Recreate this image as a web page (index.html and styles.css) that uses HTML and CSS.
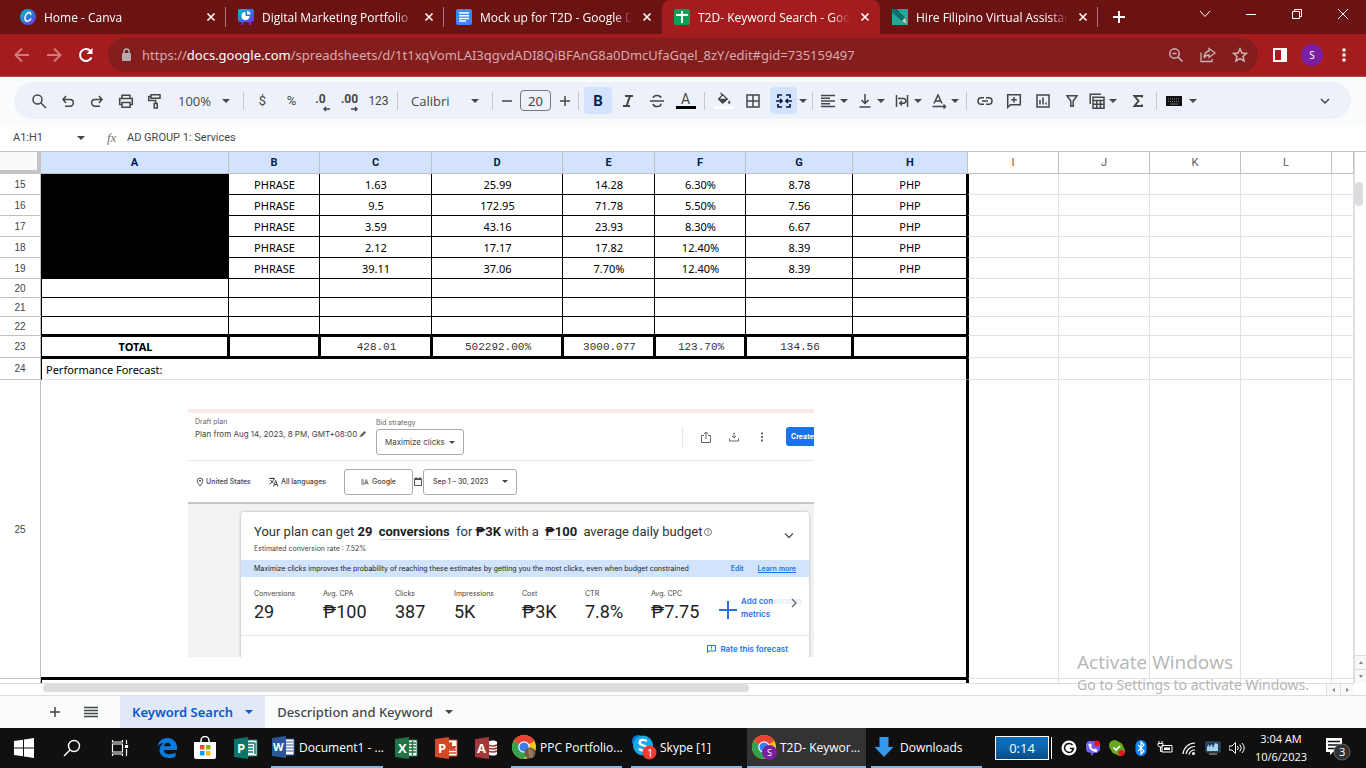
FILE: index.html
```html
<!DOCTYPE html>
<html lang="en">
<head>
  <meta charset="utf-8" />
  <meta name="viewport" content="width=device-width, initial-scale=1" />
  <title>T2D- Keyword Search - Google Sheets</title>
  <link rel="stylesheet" href="styles.css">
</head>
<body>
  <!-- browser tabs -->
  <header class="tabstrip">
    <div class="tab">
      <svg class="fav" viewBox="0 0 16 16"><defs><linearGradient id="cv" x1="0" y1="0" x2="1" y2="1"><stop offset="0" stop-color="#00c4cc"/><stop offset=".5" stop-color="#2f7be0"/><stop offset="1" stop-color="#7d2ae8"/></linearGradient></defs><circle cx="8" cy="8" r="8" fill="url(#cv)"/><path d="M10.6 5.6c.4-1.500-.3-2.100-1.300-2.100-2.300 0-4.400 3-4.400 5.700 0 1.900 1 3 2.600 3 1.500 0 2.700-1 3.300-2.300" fill="none" stroke="#fff" stroke-width="1.400" stroke-linecap="round"/></svg>
      <span class="title">Home - Canva</span>
      <button class="x" aria-label="Close tab"><svg viewBox="0 0 14 14"><path d="M3.500 3.500l7 7M10.500 3.500l-7 7"/></svg></button>
    </div>
    <div class="tab">
      <svg class="fav" viewBox="0 0 16 16"><path d="M5 12l-1.500 4M11 12l1.500 4" stroke="#7d2ae8" stroke-width="2"/><rect width="16" height="13" rx="2" fill="url(#cv)"/><path d="M7.500 3a4 4 0 1 0 4 4h-4z" fill="#fff"/><path d="M9 2v3.500h3.500A3.500 3.500 0 0 0 9 2z" fill="#fff"/></svg>
      <span class="title">Digital Marketing Portfolio -</span>
      <button class="x" aria-label="Close tab"><svg viewBox="0 0 14 14"><path d="M3.500 3.500l7 7M10.500 3.500l-7 7"/></svg></button>
    </div>
    <div class="tab">
      <svg class="fav" viewBox="0 0 16 16"><rect width="16" height="16" rx="2" fill="#4285f4"/><path d="M3 4h10M3 6.700h10M3 9.400h10M3 12h7" stroke="#fff" stroke-width="1.500"/></svg>
      <span class="title">Mock up for T2D - Google D</span>
      <button class="x" aria-label="Close tab"><svg viewBox="0 0 14 14"><path d="M3.500 3.500l7 7M10.500 3.500l-7 7"/></svg></button>
    </div>
    <div class="tab active">
      <svg class="fav" viewBox="0 0 16 16"><rect width="16" height="16" rx="2" fill="#0f9d58"/><path d="M2 6h12M8 2v12" stroke="#fff" stroke-width="2"/></svg>
      <span class="title">T2D- Keyword Search - Goo</span>
      <button class="x" aria-label="Close tab"><svg viewBox="0 0 14 14"><path d="M3.500 3.500l7 7M10.500 3.500l-7 7"/></svg></button>
    </div>
    <div class="tab">
      <svg class="fav" viewBox="0 0 16 16"><path fill="#26a69a" d="M0 0h16v16H0z"/><path d="M0 0h5l8 9-3 3L0 4z" fill="#0d7c73"/><path d="M1 1l9.500 10M3 0l9.500 9" stroke="#084f4b"/><path d="M10 12l3-3 1.500 5.500z" fill="#f4c7a0"/></svg>
      <span class="title">Hire Filipino Virtual Assistan</span>
      <button class="x" aria-label="Close tab"><svg viewBox="0 0 14 14"><path d="M3.500 3.500l7 7M10.500 3.500l-7 7"/></svg></button>
    </div>
    <button class="newtab" aria-label="New tab"><svg width="14" height="14" viewBox="0 0 14 14"><path d="M7 1v12M1 7h12" stroke="#fff" stroke-width="2"/></svg></button>
    <div class="winctl">
      <button aria-label="Search tabs"><svg width="12" height="12" viewBox="0 0 12 12"><path d="M1 3l5 5.500L11 3"/></svg></button>
      <button aria-label="Minimize"><svg width="12" height="12" viewBox="0 0 12 12"><path d="M1 6.500h10"/></svg></button>
      <button aria-label="Restore"><svg width="12" height="12" viewBox="0 0 12 12"><path d="M1.500 3.500h7v7h-7zM3.500 3V1.500h7v7H9"/></svg></button>
      <button aria-label="Close"><svg width="12" height="12" viewBox="0 0 12 12"><path d="M1 1l10 10M11 1L1 11"/></svg></button>
    </div>
  </header>

  <!-- address bar -->
  <nav class="navbar">
    <button class="dim" aria-label="Back"><svg width="16" height="16" viewBox="0 0 16 16"><path d="M15 8H2M8 1.500L1.500 8 8 14.500"/></svg></button>
    <button class="dim" aria-label="Forward"><svg width="16" height="16" viewBox="0 0 16 16"><path d="M1 8h13M8 1.500L14.500 8 8 14.500"/></svg></button>
    <button aria-label="Reload"><svg width="16" height="16" viewBox="0 0 16 16"><path d="M13.500 10.500A6 6 0 1 1 12.500 4"/><path d="M14.500 1v6h-6z" fill="#fff" stroke="none"/></svg></button>
    <div class="omnibox">
      <svg class="lock" width="12" height="14" viewBox="0 0 12 14"><rect x="2" y="5" width="9" height="8" rx="1" fill="#b3adae"/><path d="M4 5.500V3.500a2.500 2.500 0 0 1 5 0v2" fill="none" stroke="#b3adae" stroke-width="1.500"/></svg>
      <span class="url" role="textbox" aria-label="Address">https://<b>docs.google.com</b>/spreadsheets/d/1t1xqVomLAI3qgvdADI8QiBFAnG8a0DmcUfaGqel_8zY/edit#gid=735159497</span>
      <button aria-label="Zoom"><svg width="16" height="16" viewBox="0 0 16 16"><circle cx="6.500" cy="6.500" r="4.700"/><path d="M10 10l4.500 4.500M4.500 6.500h4"/></svg></button>
      <button aria-label="Share"><svg width="16" height="16" viewBox="0 0 16 16"><path d="M1 5.500v9h11V12M9 1.500l6 4.500-6 4.500V8c-2.500 0-4 .8-5 3 .2-4 2-6.500 5-7z" stroke-width="1.300"/></svg></button>
      <button aria-label="Bookmark"><svg width="16" height="16" viewBox="0 0 16 16"><path d="M8 1.800l1.900 4.200 4.600.4-3.500 3 1.100 4.500L8 11.500l-4.100 2.400L5 9.400l-3.500-3 4.600-.4z"/></svg></button>
    </div>
    <button aria-label="Side panel"><svg width="14" height="14" viewBox="0 0 14 14"><path d="M0 0h14v14H0z" fill="#fff" stroke="none"/><path d="M2 2h6v10H2z" fill="#a51c1e" stroke="none"/></svg></button>
    <button aria-label="Profile"><span class="avatar">S</span></button>
    <button aria-label="Menu"><svg width="4" height="14" viewBox="0 0 4 14"><path d="M.5.500h3v3h-3zM.5 5.500h3v3h-3zM.5 10.500h3v3h-3z" fill="#fff" stroke="none"/></svg></button>
  </nav>

  <!-- sheets toolbar -->
  <div class="toolbar">
    <div class="pill">
      <button class="tb" aria-label="Search"><svg viewBox="0 0 16 16"><circle cx="6.500" cy="6.500" r="4.500"/><path d="M10 10l5 5"/></svg></button>
      <button class="tb" aria-label="Undo"><svg viewBox="0 0 16 16"><path d="M6 3L3 6.500l3 3.500M3 6.500h7a3.300 3.300 0 0 1 0 6.700H5"/></svg></button>
      <button class="tb" aria-label="Redo"><svg viewBox="0 0 16 16"><path d="M10 3l3 3.500-3 3.500M13 6.500H6a3.300 3.300 0 0 0 0 6.700h5"/></svg></button>
      <button class="tb" aria-label="Print"><svg viewBox="0 0 16 16"><path d="M4 5.500V2.200h8v3.300M4 11.500H1.700v-6h12.600v6H12M4 9.500h8v4.800H4z"/></svg></button>
      <button class="tb" aria-label="Paint format"><svg viewBox="0 0 16 16"><path d="M4 1.700h9v3.600H4zM4 3.500H1.700v4h7v3M7.200 10.500h3v4.500h-3z"/></svg></button>
      <label class="pick zoom"><select aria-label="Zoom"><option>100%</option></select><i class="car"></i></label>
      <span class="sep"></span>
      <button class="tb txt" aria-label="Currency">$</button>
      <button class="tb txt" aria-label="Percent">%</button>
      <button class="tb dec" aria-label="Decrease decimals">.0<svg viewBox="0 0 8 6"><path d="M8 3H2M4 1L2 3l2 2"/></svg></button>
      <button class="tb dec" aria-label="Increase decimals">.00<svg viewBox="0 0 8 6"><path d="M0 3h6M4 1l2 2-2 2"/></svg></button>
      <button class="tb txt small" aria-label="More formats">123</button>
      <span class="sep"></span>
      <label class="pick font"><select aria-label="Font"><option>Calibri</option></select><i class="car"></i></label>
      <span class="sep"></span>
      <button class="step" aria-label="Smaller"><svg width="12" height="12" viewBox="0 0 12 12"><path d="M1 6h10"/></svg></button>
      <input class="size" type="text" value="20" aria-label="Font size">
      <button class="step" aria-label="Larger"><svg width="12" height="12" viewBox="0 0 12 12"><path d="M1 6h10M6 1v10"/></svg></button>
      <span class="sep"></span>
      <button class="tb on bold" aria-label="Bold">B</button>
      <button class="tb" aria-label="Italic"><svg viewBox="0 0 16 16"><path d="M5 3h8M3 13h7M10 3L6.500 13" stroke-width="2"/></svg></button>
      <button class="tb" aria-label="Strikethrough"><svg viewBox="0 0 16 16"><path d="M1 8h14M12 4.800C11.500 3 10 2.500 8 2.500 5.500 2.500 4.300 3.500 4.300 5M4 11c.4 1.800 2 2.500 4 2.500 2.500 0 4-1 4-2.800" stroke-width="1.600"/></svg></button>
      <button class="tb ink" aria-label="Text colour">A<i></i></button>
      <span class="sep"></span>
      <button class="tb ink white" aria-label="Fill colour"><svg viewBox="0 0 16 16"><path d="M6.500 3l5 5-5 4.500L2 8z"/><path d="M2.500 8.500h8.500l-4.500 4zM4 1l3 3" fill="#444746"/><path d="M14 9.500c1 1.300 1.300 2 1.300 2.700a1.300 1.300 0 0 1-2.600 0c0-.7.300-1.400 1.300-2.700z" fill="#444746" stroke="none"/></svg><i></i></button>
      <button class="tb" aria-label="Borders"><svg viewBox="0 0 16 16"><path d="M2 2h12v12H2zM8 2v12M2 8h12"/></svg></button>
      <button class="tb on merge" aria-label="Merge cells"><svg viewBox="0 0 16 16"><path d="M6 2H2v3M10 2h4v3M6 14H2v-3M10 14h4v-3M0 8h6M4 6l2 2-2 2M16 8h-6M12 6l-2 2 2 2" stroke="#041e49" stroke-width="1.700"/></svg></button>
      <button class="caret" aria-label="Merge type"><i class="car"></i></button>
      <span class="sep"></span>
      <button class="drop" aria-label="Horizontal align"><svg viewBox="0 0 16 16"><path d="M1 2.500h14M1 5.300h9M1 8h14M1 10.700h9M1 13.500h14"/></svg><i class="car"></i></button>
      <button class="drop" aria-label="Vertical align"><svg viewBox="0 0 16 16"><path d="M8 1v9M4.500 7L8 10.500 11.500 7M2.500 14h11"/></svg><i class="car"></i></button>
      <button class="drop" aria-label="Wrap"><svg viewBox="0 0 16 16"><path d="M2.500 2v12M13.500 2v12M4 5.500h5.500a2.300 2.300 0 0 1 0 4.700H6M8 8l-2.200 2.200L8 12.500"/></svg><i class="car"></i></button>
      <button class="drop" aria-label="Rotate"><svg viewBox="0 0 16 16"><path d="M3 10.500L7 2l4 8.500M4.500 8h5M1.500 13.500h13M12.500 11.500l2 2-2 2"/></svg><i class="car"></i></button>
      <span class="sep tight"></span>
      <button class="tb" aria-label="Link"><svg viewBox="0 0 16 16"><path d="M7 4.700H4.300a3.300 3.300 0 0 0 0 6.600H7M9 4.700h2.700a3.300 3.300 0 0 1 0 6.600H9M5 8h6"/></svg></button>
      <button class="tb" aria-label="Comment"><svg viewBox="0 0 16 16"><path d="M1.700 1.700h12.600v10H4.500L1.700 14.300zM8 4v5.500M5.200 6.700h5.600"/></svg></button>
      <button class="tb" aria-label="Chart"><svg viewBox="0 0 16 16"><path d="M2 2h12v12H2zM5 7v4.500M8 4.500v7M11 9.500v2"/></svg></button>
      <button class="tb" aria-label="Filter"><svg viewBox="0 0 16 16"><path d="M3 2.700h10L9.200 8v5.300H6.800V8z"/></svg></button>
      <button class="drop" aria-label="Filter views"><svg viewBox="0 0 16 16"><path d="M12 1.200H1.200V11M4 4.200h11v11H4zM4 7.500h11M4 11.300h11M7.700 7.500v7.500M11.400 7.500v7.500"/></svg><i class="car"></i></button>
      <button class="tb" aria-label="Functions"><svg viewBox="0 0 16 16"><path d="M12 4.500V3H4.500l4 5-4 5H12v-1.500" stroke-width="2"/></svg></button>
      <span class="sep"></span>
      <button class="drop wide" aria-label="Input tools"><svg viewBox="0 0 16 16"><path d="M0 3h16v10H0z" fill="#111" stroke="none"/><path d="M2 6h12M2 8.500h12" stroke="#777" stroke-width="1" stroke-dasharray="1 1"/><path d="M4 11h8" stroke="#777" stroke-width="1"/></svg><i class="car"></i></button>
      <button class="tb last" aria-label="Hide menus"><svg viewBox="0 0 16 16"><path d="M4 6l4 4 4-4"/></svg></button>
    </div>
  </div>

  <!-- formula bar -->
  <div class="formula">
    <input class="range" type="text" value="A1:H1" aria-label="Name box">
    <i class="car"></i>
    <em class="fx">fx</em>
    <input class="value" type="text" value="AD GROUP 1: Services" aria-label="Formula">
  </div>

  <main class="sheet">
    <div class="cells">
      <table>
        <colgroup>
          <col class="c-row"><col class="c-a"><col class="c-b"><col class="c-c"><col class="c-d"><col class="c-e"><col class="c-b"><col class="c-g"><col class="c-h"><col class="c-b"><col class="c-b"><col class="c-b"><col class="c-b"><col>
        </colgroup>
        <thead>
          <tr><th class="corner"></th><th>A</th><th>B</th><th>C</th><th>D</th><th>E</th><th>F</th><th>G</th><th>H</th><th class="off">I</th><th class="off">J</th><th class="off">K</th><th class="off">L</th><th class="off"></th></tr>
        </thead>
        <tbody>
          <tr class="data"><th>15</th><td class="black"></td><td>PHRASE</td><td>1.63</td><td>25.99</td><td>14.28</td><td>6.30%</td><td>8.78</td><td class="end">PHP</td><td class="e first"></td><td class="e"></td><td class="e"></td><td class="e"></td><td class="e"></td></tr>
          <tr class="data"><th>16</th><td class="black"></td><td>PHRASE</td><td>9.5</td><td>172.95</td><td>71.78</td><td>5.50%</td><td>7.56</td><td class="end">PHP</td><td class="e first"></td><td class="e"></td><td class="e"></td><td class="e"></td><td class="e"></td></tr>
          <tr class="data"><th>17</th><td class="black"></td><td>PHRASE</td><td>3.59</td><td>43.16</td><td>23.93</td><td>8.30%</td><td>6.67</td><td class="end">PHP</td><td class="e first"></td><td class="e"></td><td class="e"></td><td class="e"></td><td class="e"></td></tr>
          <tr class="data"><th>18</th><td class="black"></td><td>PHRASE</td><td>2.12</td><td>17.17</td><td>17.82</td><td>12.40%</td><td>8.39</td><td class="end">PHP</td><td class="e first"></td><td class="e"></td><td class="e"></td><td class="e"></td><td class="e"></td></tr>
          <tr class="data"><th>19</th><td class="black"></td><td>PHRASE</td><td>39.11</td><td>37.06</td><td>7.70%</td><td>12.40%</td><td>8.39</td><td class="end">PHP</td><td class="e first"></td><td class="e"></td><td class="e"></td><td class="e"></td><td class="e"></td></tr>
          <tr class="blank"><th>20</th><td class="start"></td><td></td><td></td><td></td><td></td><td></td><td></td><td class="end"></td><td class="e first"></td><td class="e"></td><td class="e"></td><td class="e"></td><td class="e"></td></tr>
          <tr class="blank"><th>21</th><td class="start"></td><td></td><td></td><td></td><td></td><td></td><td></td><td class="end"></td><td class="e first"></td><td class="e"></td><td class="e"></td><td class="e"></td><td class="e"></td></tr>
          <tr class="blank thick"><th>22</th><td class="start"></td><td></td><td></td><td></td><td></td><td></td><td></td><td class="end"></td><td class="e first"></td><td class="e"></td><td class="e"></td><td class="e"></td><td class="e"></td></tr>
          <tr class="total"><th>23</th><td class="name">TOTAL</td><td></td><td>428.01</td><td>502292.00%</td><td>3000.077</td><td>123.70%</td><td>134.56</td><td class="end"></td><td class="e first"></td><td class="e"></td><td class="e"></td><td class="e"></td><td class="e"></td></tr>
          <tr class="note"><th>24</th><td class="start end" colspan="8">Performance Forecast:</td><td class="e first"></td><td class="e"></td><td class="e"></td><td class="e"></td><td class="e"></td></tr>
          <tr class="shot"><th>25</th>
            <td class="end" colspan="8">
              <section class="plan">
                <div class="plan-head">
                  <div class="draft">
                    <small>Draft plan</small>
                    <p>Plan from Aug 14, 2023, 8 PM, GMT+08:00 <svg width="8" height="8" viewBox="0 0 8 8"><path d="M1 7l.5-2L5.500 1l1.500 1.500-4 4z" fill="#555"/></svg></p>
                  </div>
                  <div class="bid">
                    <label for="bid">Bid strategy</label>
                    <span class="box"><select id="bid"><option>Maximize clicks</option></select><i class="car"></i></span>
                  </div>
                  <div class="acts">
                    <button aria-label="Share"><svg width="12" height="12" viewBox="0 0 12 12"><path d="M4 4.500H1.500v7h9v-7H8M6 8V1M4 3l2-2 2 2"/></svg></button>
                    <button aria-label="Download"><svg width="12" height="12" viewBox="0 0 12 12"><path d="M6 1.500v5.500M4 5l2 2 2-2M1.500 7.500v2.500h9V7.500"/></svg></button>
                    <button aria-label="More"><svg width="12" height="12" viewBox="0 0 12 12"><path d="M6 1.500v2M6 5v2M6 8.500v2" stroke-width="2"/></svg></button>
                    <button class="create">Create</button>
                  </div>
                </div>
                <div class="plan-filter">
                  <span class="loc"><svg width="8" height="10" viewBox="0 0 8 10"><path d="M4 9C2 6.500 1.200 5.200 1.200 3.800a2.800 2.800 0 0 1 5.600 0C6.800 5.200 6 6.500 4 9z" fill="none" stroke="#555"/><circle cx="4" cy="3.800" r="1" fill="#555"/></svg>United States</span>
                  <span class="lang"><svg width="10" height="10" viewBox="0 0 10 10"><path d="M0 1.500h6M3 .5v1M5 1.500C4.500 4 2.500 6 .5 7M1.500 3c.8 1.500 2 2.500 3 3M4.500 9.500l2.200-6 2.300 6M5.300 7.500h2.900" fill="none" stroke="#444"/></svg>All languages</span>
                  <button class="box net"><svg width="8" height="8" viewBox="0 0 8 8"><path d="M0 2h3M0 4h3M0 6h3M3.500 6.500l1.800-5 1.800 5M4 5h2.800" fill="none" stroke="#666"/></svg>Google</button>
                  <svg class="cal" width="8" height="9" viewBox="0 0 8 9"><path d="M.5 1.500h7v7h-7zM.5 2.500h7M2 0v2M6 0v2" fill="none" stroke="#555"/></svg>
                  <span class="box date"><select aria-label="Dates"><option>Sep 1 – 30, 2023</option></select><i class="car"></i></span>
                </div>
                <div class="plan-body">
                  <div class="card">
                    <div class="lead">
                      <h2>Your plan can get <b>29</b> <b class="line">conversions</b> for <b>₱3K</b> with a <b class="line">₱100</b> average daily budget</h2>
                      <svg class="help" width="8" height="8" viewBox="0 0 8 8"><circle cx="4" cy="4" r="3.500" fill="none" stroke="#777"/><path d="M3 3.200c.2-1.200 2-1 1.900.1C4.900 4 4 4 4 5M4 5.500v.8" fill="none" stroke="#777" stroke-width=".8"/></svg>
                      <svg class="fold" width="12" height="8" viewBox="0 0 12 8"><path d="M2 1.500l4 4 4-4" fill="none" stroke="#555" stroke-width="1.300"/></svg>
                    </div>
                    <p class="rate">Estimated conversion rate : 7.52%</p>
                    <div class="tip"><span>Maximize clicks improves the probability of reaching these estimates by getting you the most clicks, even when budget constrained</span><a href="#">Edit</a><a class="u" href="#">Learn more</a></div>
                    <dl class="stats">
                      <div><dt>Conversions</dt><dd>29</dd></div>
                      <div><dt>Avg. CPA</dt><dd>₱100</dd></div>
                      <div><dt>Clicks</dt><dd>387</dd></div>
                      <div><dt>Impressions</dt><dd>5K</dd></div>
                      <div><dt>Cost</dt><dd>₱3K</dd></div>
                      <div><dt>CTR</dt><dd>7.8%</dd></div>
                      <div><dt>Avg. CPC</dt><dd>₱7.75</dd></div>
                      <div class="more"><svg width="18" height="18" viewBox="0 0 18 18"><path d="M9 0v18M0 9h18" stroke="#1a73e8" stroke-width="2"/></svg><a href="#">Add con<span>version</span><br>metrics</a><svg class="next" width="8" height="10" viewBox="0 0 8 10"><path d="M2 1l4 4-4 4" fill="none" stroke="#666" stroke-width="1.300"/></svg></div>
                    </dl>
                    <a class="feedback" href="#"><svg width="9" height="8" viewBox="0 0 9 8"><path d="M.5.500h8v5.500H2L.5 7.500zM4.500 1.500v2M4.500 4.300v.7" fill="none" stroke="#1a73e8"/></svg>Rate this forecast</a>
                  </div>
                </div>
              </section>
            </td>
            <td class="e first"></td><td class="e"></td><td class="e"></td><td class="e"></td><td class="e"></td></tr>
          <tr class="tail"><th></th><td class="start end" colspan="8"></td><td class="e first"></td><td class="e"></td><td class="e"></td><td class="e"></td><td class="e"></td></tr>
        </tbody>
      </table>
    </div>
    <div class="vbar"><span class="thumb"></span><button aria-label="Scroll up"><i class="up"></i></button><button aria-label="Scroll down"><i class="down"></i></button></div>
    <div class="hbar"><div class="rail"><span class="thumb"></span></div><button aria-label="Scroll left"><i class="left"></i></button><button aria-label="Scroll right"><i class="right"></i></button></div>
    <div class="watermark"><p>Activate Windows</p><span>Go to Settings to activate Windows.</span></div>
  </main>

  <footer class="sheets">
    <button class="add" aria-label="Add sheet"><svg width="12" height="12" viewBox="0 0 12 12"><path d="M6 1v10M1 6h10"/></svg></button>
    <button class="all" aria-label="All sheets"><svg width="14" height="12" viewBox="0 0 14 12"><path d="M0 1.500h14M0 4.500h14M0 7.500h14M0 10.500h14"/></svg></button>
    <button class="name on">Keyword Search<i class="car"></i></button>
    <button class="name">Description and Keyword<i class="car"></i></button>
  </footer>

  <!-- taskbar -->
  <div class="taskbar">
    <button class="sys" aria-label="Start"><svg width="20" height="20" viewBox="0 0 20 20"><path d="M0 3l9-1.300v7.800H0zM10 1.500L20 0v9.500H10zM0 10.500h9v7.800L0 17zM10 10.500h10V20l-10-1.500z" fill="#fff"/></svg></button>
    <button class="sys" aria-label="Search"><svg width="18" height="18" viewBox="0 0 18 18"><g fill="none" stroke="#fff" stroke-width="1.400"><circle cx="11" cy="7" r="5.500"/><path d="M7 11l-6 6"/></g></svg></button>
    <button class="sys" aria-label="Task view"><svg width="18" height="18" viewBox="0 0 18 18"><g fill="none" stroke="#fff" stroke-width="1.200"><path d="M1.500 5h10v8h-10zM1.500 1v2h10V1M1.500 17v-2h10v2M15.500 1v4M15.500 10v7"/><path d="M14.500 6.500h2v2h-2z" fill="#fff"/></g></svg></button>
    <button class="edge" aria-label="Edge"><svg width="20" height="20" viewBox="0 0 20 20"><path d="M.3 9C1.200 3.500 5 0 10.300 0 16.500 0 20 4.500 20 9.500V12H6.800c.2 3 2.700 4.200 5.500 4.200 2.300 0 4.400-.6 6.200-1.700v4C16.700 19.500 14.300 20 12 20 6.500 20 2.500 17 2.500 12c0-3 1.800-5.600 4.600-7C4 5 1.500 6.500.3 9zM7 8.200h6.700c0-2.200-1-3.500-3-3.500C8.600 4.700 7.300 6.200 7 8.200z" fill="#0b7bdc"/></svg></button>
    <button class="store" aria-label="Store"><svg width="24" height="24" viewBox="0 0 24 24"><path d="M8 7V4.500a4 4 0 0 1 8 0V7" fill="none" stroke="#fff" stroke-width="1.500"/><path d="M1 6h22v15a2 2 0 0 1-2 2H3a2 2 0 0 1-2-2z" fill="#fff"/><path fill="#f25022" d="M7 9h4.500v4.500H7z"/><path fill="#7fba00" d="M13 9h4.500v4.500H13z"/><path fill="#00a4ef" d="M7 15h4.500v4.500H7z"/><path fill="#ffb900" d="M13 15h4.500v4.500H13z"/></svg></button>
    <button class="pub" aria-label="Publisher"><svg width="24" height="22" viewBox="0 0 24 22"><path d="M12 3h11v16H12z" fill="#fff" stroke="#077568"/><path d="M14 6h7M14 9h5M14 12h5M14 15h5M21 6v11" stroke="#077568" stroke-width="1.500"/><path d="M0 2l14-2v22L0 20z" fill="#077568"/><text x="3" y="16" class="let">P</text></svg></button>
    <button class="app word"><svg width="24" height="22" viewBox="0 0 24 22"><path d="M12 3h10v16H12z" fill="#fff" stroke="#2b579a"/><path d="M13 6h8M13 9h8M13 12h8M13 15h8" stroke="#2b579a"/><path d="M0 2l14-2v22L0 20z" fill="#2b579a"/><text x="1" y="15" class="let sm">W</text></svg><span>Document1 - ...</span></button>
    <button class="sys" aria-label="Excel"><svg width="24" height="22" viewBox="0 0 24 22"><path d="M12 3h10v16H12z" fill="#fff" stroke="#217346"/><path d="M14 6h7M14 9h7M14 12h7M14 15h7M17.500 4v14" stroke="#217346" stroke-width="1.500"/><path d="M0 2l14-2v22L0 20z" fill="#217346"/><text x="3" y="16" class="let">X</text></svg></button>
    <button class="ppt" aria-label="PowerPoint"><svg width="24" height="22" viewBox="0 0 24 22"><path d="M12 3h10v16H12z" fill="#fff" stroke="#d24726"/><path d="M14 13h7M14 16h7" stroke="#d24726" stroke-width="1.500"/><path d="M17 5v4h4a4 4 0 1 1-4-4z" fill="#d24726"/><path d="M0 2l14-2v22L0 20z" fill="#d24726"/><text x="3" y="16" class="let">P</text></svg></button>
    <button class="sys" aria-label="Access"><svg width="24" height="22" viewBox="0 0 24 22"><path d="M13 5c2-2 8-2 9 0v12c-1 2-7 2-9 0z" fill="#fff"/><path d="M13 8c3 1 7 1 9 0M13 11c3 1 7 1 9 0M13 14c3 1 7 1 9 0" stroke="#a4373a" stroke-width="1.500" fill="none"/><path d="M0 2l14-2v22L0 20z" fill="#a4373a"/><text x="2" y="16" class="let">A</text></svg></button>
    <button class="app"><svg width="26" height="26" viewBox="0 0 26 26"><circle cx="13" cy="13" r="12" fill="#fbc116"/><path d="M13 13L2.600 7a12 12 0 0 1 20.800 0z" fill="#ea4335"/><path d="M2.600 7A12 12 0 0 0 13 25l5-9-5-3z" fill="#34a053"/><circle cx="13" cy="13" r="5.800" fill="#fff"/><circle cx="13" cy="13" r="4.600" fill="#3b7ded"/><circle cx="19" cy="19" r="5.500" fill="#6d5b45"/><path d="M17 15.500c3-1.500 5 1 5 4v4h-4z" fill="#98795a"/></svg><span>PPC Portfolio...</span></button>
    <button class="app skype"><svg width="26" height="26" viewBox="0 0 26 26"><circle cx="7" cy="7" r="6" fill="#0078d4"/><circle cx="12" cy="11.500" r="10" fill="#19a9e8"/><circle cx="16" cy="16" r="6" fill="#19a9e8"/><path d="M15.500 7.500C14.500 5.500 8.500 5 8.500 8.500c0 3.500 7 2 7 5.500 0 3.300-6 3.200-7.300.5" fill="none" stroke="#fff" stroke-width="2.300"/><circle cx="18.500" cy="18.500" r="7" fill="#f03a34"/><text x="16" y="23" class="num">1</text></svg><span>Skype [1]</span></button>
    <button class="app current"><svg width="26" height="26" viewBox="0 0 26 26"><circle cx="13" cy="13" r="12" fill="#fbc116"/><path d="M13 13L2.600 7a12 12 0 0 1 20.800 0z" fill="#ea4335"/><path d="M2.600 7A12 12 0 0 0 13 25l5-9-5-3z" fill="#34a053"/><circle cx="13" cy="13" r="5.800" fill="#fff"/><circle cx="13" cy="13" r="4.600" fill="#3b7ded"/><circle cx="18.500" cy="18.500" r="7.500" fill="#7b1fa2"/><text x="16" y="22" class="num sm">S</text></svg><span>T2D- Keywor...</span></button>
    <button class="app"><svg width="26" height="26" viewBox="0 0 26 26"><path d="M8.500 3h9v10h5L13 23 3.500 13h5z" fill="#3698ea"/></svg><span>Downloads</span></button>

    <div class="tray">
      <span class="battery">0:14</span>
      <svg viewBox="0 0 16 16"><circle cx="8" cy="8" r="7.500" fill="#fff"/><path d="M11.500 5A4.500 4.500 0 1 0 12.500 8.500H9M12.500 8.500l-1.500 3" fill="none" stroke="#111" stroke-width="1.500"/></svg>
      <svg viewBox="0 0 16 16"><path d="M3 1h10l2 3v6l-3 3H9l-3 3v-3l-4-1-1-3V4z" fill="#7360f2"/><path d="M3.500 4c0 4 3 8 8 8l1-2-2.500-1.500-1 1C7.500 9 6.500 8 6 6.800l1-1-1.200-2.300z" fill="#fff"/><circle cx="12" cy="3.500" r="3" fill="#ee1122"/></svg>
      <svg viewBox="0 0 16 16"><circle cx="5.500" cy="5.500" r="5.500" fill="#66a81f"/><circle cx="8" cy="8" r="6.500" fill="#66a81f"/><circle cx="11" cy="11" r="5" fill="#66a81f"/><path d="M4.500 7.500l2.500 2.500 4-4" fill="none" stroke="#fff" stroke-width="1.700"/><circle cx="12.500" cy="13" r="3" fill="#ee1122"/></svg>
      <svg viewBox="0 0 16 16"><rect x="2.500" width="11" height="16" rx="5.500" fill="#0a84ff"/><path d="M5 5l6 6-3 3V2l3 3-6 6" fill="none" stroke="#fff" stroke-width="1.200"/></svg>
      <svg viewBox="0 0 16 16"><g fill="none" stroke="#fff"><path d="M5 5.500h10v6.500H5zM1 3.500h5v2c0 2-5 2-5 0zM2 1v2.500M5 1v2.500M3.500 7v4.500H5"/></g><path d="M7 7.500h6V10H7z" fill="#fff"/></svg>
      <svg viewBox="0 0 16 16"><g fill="none" stroke="#fff" stroke-width="1.200"><path d="M2 14A12 12 0 0 1 14 3M5 14a9 9 0 0 1 9-7.500M8 14.500A6 6 0 0 1 14 10" /></g><circle cx="12.500" cy="13.500" r="1.500" fill="#fff"/></svg>
      <svg viewBox="0 0 16 16"><path d="M1 2h14v10H1z" fill="#163a63" stroke="#456"/><path d="M2 11V7l2-3v3l3-3 1 4 2-5 3 1v7z" fill="#aad3ee"/><path d="M4 13h8v2H4z" fill="#666"/></svg>
      <svg viewBox="0 0 16 16"><path d="M0 6h3l3.500-3.500v11L3 10H0zM8.500 6q1.500 2 0 4M10.800 4.500q3 3.500 0 7M13 3q4.500 5 0 10" fill="none" stroke="#fff"/></svg>
      <time>3:04 AM<br>10/6/2023</time>
      <button class="notes" aria-label="Notifications"><svg width="26" height="26" viewBox="0 0 26 26"><path d="M1 3h16v14H8l-3 3v-3H1z" fill="#fff"/><path d="M3 6.500h12M3 10h12M3 13.500h7" stroke="#111" stroke-width="1.500"/><circle cx="17" cy="17" r="8" fill="#333" stroke="#666"/><text x="14" y="21" class="num">3</text></svg></button>
    </div>
  </div>
</body>
</html>
```

FILE: styles.css
```css
:root { --red:#a51c1e; --dark:#6b1212; --omni:#841d1e; --ui:"Noto Sans","Open Sans",sans-serif; --ink:#444746; --line:#c0c0c0; --blue:#0b57d0; }
* { box-sizing: border-box; }
body { margin: 0; min-height: 100vh; display: flex; flex-direction: column; overflow: hidden; background: #fff; font-family: var(--ui); font-size: 12px; color: #000; }
button, input, select { font: inherit; color: inherit; border: 0; padding: 0; margin: 0; background: none; outline: 0; }
button { display: flex; align-items: center; justify-content: center; cursor: pointer; }
select { appearance: none; }
svg { flex: none; }
p, h2, dl, dd { margin: 0; }
a { text-decoration: none; }
.car { flex: none; width: 0; height: 0; border: 4px solid transparent; border-top-color: var(--ink); border-bottom: 0; }

/* tabs */
.tabstrip { display: flex; height: 34px; padding-left: 8px; background: var(--dark); color: #fff; }
.tab { flex: 0 1 218px; min-width: 0; display: flex; align-items: center; gap: 8px; padding: 0 8px 0 12px; background: linear-gradient(#a77,#a77) right center / 1px 20px no-repeat; font-family: "Open Sans", sans-serif; }
.tab:nth-child(3), .tab.active { background: none; }
.tab.active { background: var(--red); border-radius: 8px 8px 0 0; }
.fav { width: 16px; height: 16px; }
.title { flex: 1; white-space: nowrap; overflow: hidden; -webkit-mask: linear-gradient(90deg,#000 88%,transparent); mask: linear-gradient(90deg,#000 88%,transparent); }
.x svg { width: 14px; height: 14px; stroke: #fff; stroke-width: 1.600; }
.newtab { width: 42px; }
.winctl { display: flex; height: 28px; margin-left: auto; }
.winctl button { width: 46px; }
.winctl svg { fill: none; stroke: #fff; }

/* address bar */
.navbar { display: flex; align-items: center; height: 43px; padding: 0 6px; background: var(--red); border-bottom: 1px solid #b94b4e; }
.navbar button { width: 32px; height: 32px; }
.navbar svg { fill: none; stroke: #fff; stroke-width: 2; }
.navbar .dim svg { stroke: #cf7a7b; }
.omnibox { flex: 1; display: flex; align-items: center; height: 34px; margin: 0 6px; padding: 0 2px 0 12px; border-radius: 17px; background: var(--omni); }
.omnibox .lock { stroke: none; margin-right: 10px; }
.omnibox button svg { stroke: #ccb3b3; stroke-width: 1.500; }
.url { flex: 1; font-size: 13px; color: #d5abab; white-space: nowrap; overflow: hidden; }
.url b { font-weight: 400; color: #fff; }
.avatar { width: 22px; height: 22px; border-radius: 50%; background: #7b1fa2; color: #fff; font-size: 10px; line-height: 22px; text-align: center; }

/* toolbar */
.toolbar { padding: 5px 15px 7px 14px; background: #f9fbfd; }
.pill { display: flex; align-items: center; height: 37px; padding: 0 12px 0 10px; border-radius: 19px; background: #edf2fa; color: var(--ink); }
.pill svg { width: 16px; height: 16px; fill: none; stroke: var(--ink); stroke-width: 1.500; }
.tb { width: 29px; height: 27px; border-radius: 4px; }
.sep { width: 1px; height: 18px; margin: 0 4px; background: #c7c7c7; }
.sep.tight { margin: 0 3px 0 1px; }
.pick { display: flex; align-items: center; justify-content: space-between; padding: 0 9px 0 9px; font-family: "Open Sans", sans-serif; font-size: 13px; }
.pick.zoom { width: 70px; }
.pick.font { width: 86px; }
.txt { font-family: Roboto, sans-serif; font-size: 13px; }
.txt.small { font-size: 12px; }
.dec { position: relative; align-items: flex-start; padding-top: 5px; font: 700 12px/14px Roboto, sans-serif; }
.pill .dec svg { position: absolute; right: 5px; bottom: 2px; width: 8px; height: 6px; }
.step { width: 19px; height: 27px; }
.pill .step svg { width: 12px; height: 12px; }
.size { width: 31px; height: 21px; margin: 0 4px; border: 1px solid #747775; border-radius: 4px; text-align: center; font-size: 13px; }
.on { background: #d3e3fd; }
.bold { width: 28px; margin: 0 1px; font: 700 15px Roboto, sans-serif; color: #041e49; }
.ink { flex-direction: column; font: 14px/14px Roboto, sans-serif; }
.ink i { width: 20px; height: 3px; background: #000; }
.ink.white i { background: #fff; }
.pill .ink svg { height: 14px; }
.merge { width: 27px; margin-left: 3px; }
.caret { width: 11px; }
.drop { width: 37px; height: 27px; padding: 0 6px 0 3px; justify-content: space-between; }
.drop.wide { width: 42px; padding-left: 5px; }
.last { margin-left: auto; }

/* formula bar */
.formula { display: flex; align-items: center; height: 25px; padding: 0 0 2px 13px; font-family: Roboto, sans-serif; color: var(--ink); }
.range { width: 64px; font-size: 11px; }
.fx { width: 20px; margin-left: 22px; font: italic 13px "Liberation Serif", serif; color: #777; }
.value { flex: 1; font-size: 11px; }

/* grid */
.sheet { position: relative; flex: 1; display: grid; grid-template: minmax(0,1fr) 12px / minmax(0,1fr) 12px; border-top: 1px solid var(--line); }
.cells { overflow: hidden; height: 531px; }
table { width: 100%; table-layout: fixed; border-collapse: separate; border-spacing: 0; font-size: 11px; line-height: 14px; }
.c-row { width: 41px; } .c-a { width: 188px; } .c-b { width: 91px; } .c-c { width: 112px; } .c-d { width: 131px; } .c-e { width: 92px; } .c-g { width: 107px; } .c-h { width: 115px; }
th, td { padding: 0; text-align: center; border: solid #000; border-width: 0 1px 1px 0; }
th { font-family: Roboto, sans-serif; border-color: var(--line); }
thead th { height: 22px; font-size: 11px; background: #d3e3fd; color: #041e49; }
thead .off { background: #fff; font-weight: 400; color: #575b5f; }
thead .corner { background: #f8f9fa; border: solid #c4c4c4; border-width: 0 4px 4px 0; }
tbody th { font: 10px "Liberation Sans", sans-serif; color: #444; }
.data td { height: 21px; padding: 2px 0 0 1px; }
.blank td { height: 19px; }
.total td { height: 22px; padding-left: 2px; border-width: 1px 2px 2px 1px; font-family: "Liberation Mono", monospace; color: #333; }
.total .name { font: 700 11px/14px var(--ui); color: #000; }
.note td { height: 22px; border-top-width: 1px; text-align: left; padding: 2px 0 0 4px; }
.black { background: #000; }
td.start { border-left-width: 1px; }
td.end { border-right-width: 2px; }
tr .e { border: solid #e1e1e1; border-width: 0 1px 1px 0; }
tr .first { border-left: 1px solid #000; }
.thick td:not(.e) { border-bottom-width: 2px; }
.note td.end { border-bottom-color: #e1e1e1; border-top-color: #000; }
.shot td { height: 299px; vertical-align: top; }
.shot td.end { border-bottom-width: 2px; }
.tail td { height: 20px; }
.tail td.end { border-top-width: 1px; }

/* forecast */
.plan { width: 626px; height: 248px; margin: 29px 0 0 147px; overflow: hidden; border-top: 4px solid #fce8e6; font: 8px/10px Inter, sans-serif; color: #444; text-align: left; }
.plan .car { border-width: 3px 3px 0; }
.plan small, .bid label { display: block; font-size: 7px; line-height: 12px; color: #666; }
.plan-head { display: flex; height: 48px; padding-left: 7px; border-bottom: 1px solid #e4e6e8; }
.draft { width: 181px; padding-top: 3px; white-space: nowrap; }
.draft p { font-size: 8px; line-height: 12px; }
.draft svg { vertical-align: -1px; }
.bid { padding-top: 4px; }
.box { display: flex; align-items: center; height: 26px; border: 1px solid #aaa; border-radius: 3px; background: #fff; }
.bid .box { width: 88px; padding: 0 8px; gap: 4px; }
.acts { display: flex; align-items: center; gap: 16px; height: 21px; margin: 13px 0 0 auto; padding-left: 17px; border-left: 1px solid #e4e6e8; }
.acts svg { fill: none; stroke: #666; }
.acts .create { flex: none; width: 28px; height: 19px; margin-left: 2px; padding-left: 5px; justify-content: flex-start; overflow: hidden; border-radius: 3px 0 0 3px; background: #1a73e8; color: #fff; font-size: 7px; font-weight: 700; }
.plan-filter { display: flex; align-items: center; height: 43px; padding-left: 8px; border-bottom: 2px solid #c4c6c8; }
.loc, .lang { display: flex; align-items: center; gap: 2px; font-size: 7px; font-weight: 500; }
.loc { width: 73px; }
.lang { width: 75px; }
.net { width: 69px; gap: 3px; font-size: 7px; font-weight: 500; }
.cal { margin: 0 1px; }
.date { width: 94px; padding: 0 8px 0 9px; justify-content: space-between; font-size: 7px; font-weight: 500; }
.plan-body { height: 154px; padding: 8px 5px 0 53px; background: #f0f2f4; }
.card { height: 150px; background: #fff; border-radius: 3px 3px 0 0; box-shadow: 0 0 3px #aaa; }
.lead { display: flex; align-items: center; padding: 10px 14px 0 13px; height: 29px; }
.lead h2 { font: 13px/18px Roboto, sans-serif; color: #333; white-space: nowrap; }
.lead b { font-weight: 700; color: #202124; }
.lead .line { margin: 0 3px; border-bottom: 1px solid #ddd; }
.help { margin-left: 2px; }
.fold { margin: 9px 0 0 auto; }
.rate { padding: 3px 13px 6px; font-size: 7px; }
.tip { display: flex; align-items: center; height: 17px; padding: 0 13px; background: #d2e3fc; font-size: 7px; color: #222; white-space: nowrap; }
.tip span { margin-right: auto; }
.tip a { margin-left: 14px; }
.plan a { color: #1a73e8; font-weight: 600; font-size: 7px; }
.tip .u { text-decoration: underline; }
.stats { display: grid; grid-template-columns: 69px 72px 59px 68px 63px 66px 68px 1fr; height: 59px; padding: 12px 0 0 13px; border-bottom: 1px solid #e4e6e8; }
.stats dt { font-size: 7px; line-height: 10px; }
.stats dd { font: 18px/26px Roboto, sans-serif; color: #222; }
.more { display: flex; align-items: flex-start; gap: 4px; padding-top: 6px; }
.more > svg { margin-top: 6px; }
.plan .more a { width: 45px; font-size: 8px; line-height: 13px; white-space: nowrap; }
.more a span { color: #dfe9fb; }
.more .next { margin-top: 3px; }
.plan .feedback { display: flex; align-items: center; justify-content: flex-end; gap: 4px; padding: 8px 21px 0; font-size: 8px; }

/* scrollbars */
.vbar { display: flex; flex-direction: column; justify-content: flex-end; border-left: 1px solid #ddd; padding-top: 30px; }
.vbar .thumb { width: 8px; height: 24px; margin-bottom: auto; border-radius: 4px; background: #dadce0; }
.vbar button { height: 14px; background: #f8f8f8; border-top: 1px solid #ddd; }
.hbar { grid-column: 1; display: flex; border-top: 1px solid #ddd; padding-left: 43px; }
.rail { flex: 1; }
.hbar .thumb { display: block; width: 55%; height: 8px; border-radius: 4px; background: #dadce0; }
.hbar button { width: 14px; border-left: 1px solid #ddd; background: #f8f8f8; }
.up, .down, .left, .right { border: 2px solid transparent; }
.up { border-bottom: 3px solid #888; border-top: 0; }
.down { border-top: 3px solid #888; border-bottom: 0; }
.left { border-right: 3px solid #888; border-left: 0; }
.right { border-left: 3px solid #888; border-right: 0; }
.watermark { position: absolute; right: 57px; bottom: 0; color: #b5b5b5; white-space: nowrap; }
.watermark p { font: 19px/25px "Open Sans", sans-serif; }
.watermark span { font-size: 14px; line-height: 20px; }

/* sheet tabs */
.sheets { display: flex; height: 33px; padding-left: 37px; border-top: 1px solid #ddd; background: #f9fbfd; color: var(--ink); }
.sheets svg { fill: none; stroke: var(--ink); stroke-width: 1.500; }
.sheets .add, .sheets .all { width: 36px; }
.sheets .all { margin-right: 11px; }
.sheets .name { gap: 12px; padding: 0 12px; font-size: 13px; font-weight: 500; }
.sheets .on { background: #e1e9f7; color: var(--blue); font-weight: 600; }
.sheets .on .car { border-top-color: var(--blue); }

/* taskbar */
.taskbar { display: flex; height: 40px; background: #101010; color: #fff; font-family: "Open Sans", sans-serif; }
.sys { width: 48px; }
.edge { width: 46px; }
.store { width: 30px; }
.pub { width: 51px; }
.ppt { width: 32px; }
.app { width: 111px; justify-content: flex-start; gap: 3px; border-bottom: 2px solid #76b9ed; white-space: nowrap; }
.word { width: 112px; padding-left: 1px; }
.skype { margin: 0 5px 0 9px; }
.current { width: 119px; margin-right: 5px; padding-left: 4px; background: #333; }
.let { font: 700 13px "Open Sans", sans-serif; fill: #fff; }
.let.sm { font-size: 11px; }
.num { font: 11px "Open Sans", sans-serif; fill: #fff; }
.num.sm { font-size: 9px; }
.tray { display: flex; align-items: center; margin-left: auto; }
.tray > svg { width: 16px; height: 16px; margin: 0 4px; }
.battery { width: 54px; height: 24px; margin-right: 8px; border: 1px solid #fff; box-shadow: 3px 0 0 -1px #101010, 4px 0 0 -1px #fff; background: linear-gradient(#0d6db8,#0b66ad 50%,#054b85); font-size: 13px; line-height: 22px; text-align: center; }
.tray time { width: 56px; margin-left: 4px; font-size: 11px; line-height: 18px; text-align: center; }
.notes { width: 57px; }
```
